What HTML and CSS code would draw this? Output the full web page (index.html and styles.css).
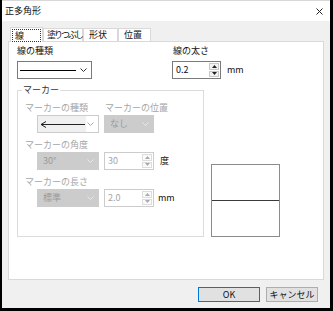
FILE: index.html
```html
<!DOCTYPE html>
<html lang="ja">
<head>
    <meta charset="UTF-8">
    <meta name="viewport" content="width=device-width, initial-scale=1.0">
    <title>正多角形</title>
    <link rel="stylesheet" href="styles.css">
</head>
<body>
    <div class="window">
        <div class="titlebar">
            <span class="title">正多角形</span>
            <svg class="close" width="7" height="7" viewBox="0 0 7 7"><path d="M0.5 0.5L6.5 6.5M6.5 0.5L0.5 6.5" stroke="#222" stroke-width="1"/></svg>
        </div>

        <div class="tabs">
            <div class="tab active"><span>線</span></div>
            <div class="tab tab-fill">塗りつぶし</div>
            <div class="tab tab-shape">形状</div>
            <div class="tab tab-pos">位置</div>
        </div>

        <div class="panel">
            <div class="toprow">
                <div class="field">
                    <div class="label">線の種類</div>
                    <div class="select linetype">
                        <span class="line"></span>
                        <svg class="chev" width="7" height="4" viewBox="0 0 7 4"><path d="M0.5 0.5L3.5 3.5L6.5 0.5" fill="none" stroke="#333" stroke-width="1"/></svg>
                    </div>
                </div>
                <div class="field thickness">
                    <div class="label">線の太さ</div>
                    <div class="spinrow">
                        <div class="spin">
                            <span class="value">0.2</span>
                            <div class="arrows">
                                <div class="arrow"><svg width="5" height="3" viewBox="0 0 5 3"><path d="M0 3L2.5 0L5 3Z" fill="#222"/></svg></div>
                                <div class="arrow"><svg width="5" height="3" viewBox="0 0 5 3"><path d="M0 0L2.5 3L5 0Z" fill="#222"/></svg></div>
                            </div>
                        </div>
                        <span class="unit">mm</span>
                    </div>
                </div>
            </div>

            <div class="midrow">
                <fieldset class="marker">
                    <legend>マーカー</legend>
                    <div class="grid">
                        <div class="cell">
                            <div class="label off">マーカーの種類</div>
                            <div class="select markertype">
                                <span class="pick"><svg width="46" height="7" viewBox="0 0 46 7"><path d="M6 0.5L1 3.5L6 6.5" fill="none" stroke="#222" stroke-width="1"/><path d="M1 3.5H45" stroke="#222" stroke-width="1"/></svg></span>
                                <svg class="chev" width="7" height="4" viewBox="0 0 7 4"><path d="M0.5 0.5L3.5 3.5L6.5 0.5" fill="none" stroke="#aaa" stroke-width="1"/></svg>
                            </div>
                        </div>
                        <div class="cell col2">
                            <div class="label off">マーカーの位置</div>
                            <div class="select dis small">
                                <span class="value">なし</span>
                                <svg class="chev" width="7" height="4" viewBox="0 0 7 4"><path d="M0.5 0.5L3.5 3.5L6.5 0.5" fill="none" stroke="#e8e8e8" stroke-width="1"/></svg>
                            </div>
                        </div>
                        <div class="cell">
                            <div class="label off">マーカーの角度</div>
                            <div class="select dis">
                                <span class="value">30°</span>
                                <svg class="chev" width="7" height="4" viewBox="0 0 7 4"><path d="M0.5 0.5L3.5 3.5L6.5 0.5" fill="none" stroke="#e8e8e8" stroke-width="1"/></svg>
                            </div>
                        </div>
                        <div class="cell col2">
                            <div class="label">&nbsp;</div>
                            <div class="spinrow">
                                <div class="spin off small">
                                    <span class="value">30</span>
                                    <div class="arrows">
                                        <div class="arrow"><svg width="5" height="3" viewBox="0 0 5 3"><path d="M0 3L2.5 0L5 3Z" fill="#aaa"/></svg></div>
                                        <div class="arrow"><svg width="5" height="3" viewBox="0 0 5 3"><path d="M0 0L2.5 3L5 0Z" fill="#aaa"/></svg></div>
                                    </div>
                                </div>
                                <span class="unit deg">度</span>
                            </div>
                        </div>
                        <div class="cell">
                            <div class="label off">マーカーの長さ</div>
                            <div class="select dis">
                                <span class="value">標準</span>
                                <svg class="chev" width="7" height="4" viewBox="0 0 7 4"><path d="M0.5 0.5L3.5 3.5L6.5 0.5" fill="none" stroke="#e8e8e8" stroke-width="1"/></svg>
                            </div>
                        </div>
                        <div class="cell col2">
                            <div class="label">&nbsp;</div>
                            <div class="spinrow">
                                <div class="spin off small">
                                    <span class="value">2.0</span>
                                    <div class="arrows">
                                        <div class="arrow"><svg width="5" height="3" viewBox="0 0 5 3"><path d="M0 3L2.5 0L5 3Z" fill="#aaa"/></svg></div>
                                        <div class="arrow"><svg width="5" height="3" viewBox="0 0 5 3"><path d="M0 0L2.5 3L5 0Z" fill="#aaa"/></svg></div>
                                    </div>
                                </div>
                                <span class="unit mm2">mm</span>
                            </div>
                        </div>
                    </div>
                </fieldset>
                <div class="preview"><div class="hline"></div></div>
            </div>
        </div>

        <div class="actions">
            <button class="btn ok">OK</button>
            <button class="btn cancel">キャンセル</button>
        </div>
    </div>
</body>
</html>
```

FILE: styles.css
```css
*{
    margin: 0;
    padding: 0;
    box-sizing: border-box;
}
body{
    font-family: "Noto Sans CJK JP", "Noto Sans", sans-serif;
    font-size: 9px;
    line-height: 12px;
    color: #111;
    background: #000;
}
.window{
    width: 333px;
    height: 311px;
    background: #f0f0f0;
    border-left: 2px solid #000;
    border-right: 3px solid #000;
    border-bottom: 3px solid #000;
    display: flex;
    flex-direction: column;
}

.titlebar{
    height: 21px;
    background: #fff;
    border-top: 1px solid #d8d8d8;
    display: flex;
    align-items: center;
    justify-content: space-between;
    padding: 0 7px 0 3px;
}

/* tabs */
.tabs{
    display: flex;
    align-items: flex-end;
    height: 14px;
    margin: 6px 0 0 8px;
}
.tab{
    height: 13px;
    padding-left: 4px;
    background: #fff;
    border: 1px solid #d9d9d9;
    border-bottom: none;
    white-space: nowrap;
}
.tab.active{
    width: 33px;
    height: 15px;
    margin-bottom: -1px;
    padding: 1px 1px 0 1px;
    position: relative;
    z-index: 1;
}
.tab.active span{
    display: block;
    height: 13px;
    padding-left: 2px;
    border: 1px dotted #333;
    line-height: 11px;
}
.tab-fill{ width: 40px; padding-left: 3px; letter-spacing: -2px; }
.tab-shape{ width: 35px; padding-left: 5px; }
.tab-pos{ width: 33px; padding-left: 5px; }

.panel{
    width: 316px;
    height: 239px;
    margin-left: 6px;
    background: #fff;
    border: 1px solid #d9d9d9;
    padding: 3px 0 0 8px;
}

.toprow{
    display: flex;
}
.thickness{
    margin-left: 80px;
}
.label{
    height: 12px;
    white-space: nowrap;
}
.thickness .label{
    padding-left: 1px;
}
.off{
    color: #a6a6a6;
}

.select{
    height: 18px;
    display: flex;
    align-items: center;
    justify-content: space-between;
    background: #fff;
    border: 1px solid #7a7a7a;
    padding-right: 4px;
}
.linetype{
    width: 75px;
    margin-top: 4px;
}
.linetype .line{
    width: 56px;
    height: 1px;
    margin-left: 2px;
    background: #000;
}

.spinrow{
    display: flex;
    align-items: center;
}
.thickness .spinrow{
    margin-top: 4px;
}
.spin{
    width: 49px;
    height: 18px;
    display: flex;
    justify-content: space-between;
    background: #fff;
    border: 1px solid #7a7a7a;
}
.spin .value{
    padding-left: 3px;
    line-height: 16px;
}
.arrows{
    width: 11px;
    display: flex;
    flex-direction: column;
    gap: 1px;
    padding: 1px 1px 1px 0;
}
.arrow{
    flex: 1;
    display: flex;
    align-items: center;
    justify-content: center;
    background: #f2f2f2;
    border: 1px solid #c8c8c8;
}
.unit{
    margin-left: 6px;
}
.mm2{
    margin-left: 4px;
}

/* marker group */
.midrow{
    display: flex;
    align-items: flex-end;
    margin-top: 5px;
}
.marker{
    width: 187px;
    border: 1px solid #dcdcdc;
    padding: 6px 0 29px 7px;
}
.marker legend{
    margin-left: -3px;
    padding: 0 1px;
    color: #333;
}
.grid{
    display: grid;
    grid-template-columns: 79px auto;
    row-gap: 6px;
}
.cell .select, .cell .spinrow{
    margin-top: 1px;
}
.cell .select{
    width: 62px;
    margin-left: 12px;
    border-color: #cccccc;
}
.col2{
    padding-left: 1px;
}
.col2 .select, .col2 .spinrow{
    margin-left: -1px;
}
.select.small{
    width: 50px;
}
.select.dis{
    background: #cccccc;
}
.select.dis .value{
    padding-left: 5px;
    color: #9a9a9a;
}
.markertype .pick{
    width: 48px;
    height: 16px;
    display: flex;
    align-items: center;
    padding-left: 2px;
    background: #f0f0f0;
}
.spin.off{
    border-color: #cccccc;
}
.spin.off .value{
    color: #a6a6a6;
}
.spin.small{
    width: 50px;
}
.spin.off .arrow{
    background: #fafafa;
    border-color: #dddddd;
}

.preview{
    width: 69px;
    height: 73px;
    margin-left: 7px;
    background: #fff;
    border: 1px solid #8c8c8c;
    display: flex;
    align-items: center;
}
.hline{
    width: 100%;
    height: 1px;
    background: #3a3a3a;
}

.actions{
    display: flex;
    justify-content: flex-end;
    gap: 6px;
    margin-top: 7px;
    padding-right: 12px;
}
.btn{
    height: 15px;
    font-family: inherit;
    font-size: 9px;
    line-height: 13px;
    color: #111;
    background: #e1e1e1;
    border: 1px solid #adadad;
}
.ok{
    width: 62px;
    border-color: #0078d7;
}
.cancel{
    width: 52px;
}
```
